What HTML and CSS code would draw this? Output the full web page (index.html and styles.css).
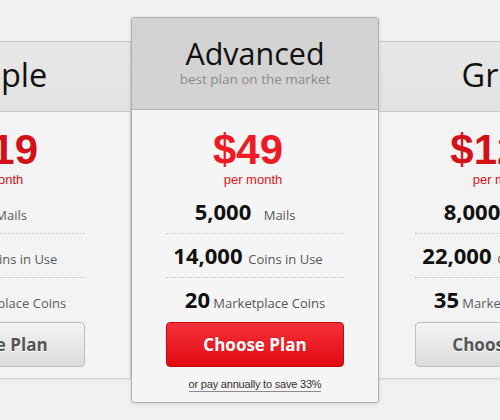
FILE: index.html
```html
<!doctype html>
<html lang="en">
<head>
    <meta charset="utf-8" />
    <link rel="stylesheet" href="styles.css">
    <title>Pricing plans</title>
</head>
<body>
    <div class="plans">
        <!--左侧套餐-->
        <div class="plan side">
            <div class="plan-head">
                <h2>Simple</h2>
            </div>
            <div class="plan-body">
                <div class="price">$19</div>
                <div class="per">per month</div>
                <ul class="feats">
                    <li>500 <span class="unit">&nbsp;&nbsp;Mails</span></li>
                    <li>4,000 <span class="unit">Coins in Use</span></li>
                    <li>10<span class="unit"> Marketplace Coins</span></li>
                </ul>
                <a class="btn" href="#">Choose Plan</a>
            </div>
        </div>

        <!--推荐套餐-->
        <div class="plan featured">
            <div class="plan-head">
                <h2>Advanced</h2>
                <p>best plan on the market</p>
            </div>
            <div class="plan-body">
                <div class="price">$49</div>
                <div class="per">per month</div>
                <ul class="feats">
                    <li>5,000 <span class="unit">&nbsp;&nbsp;Mails</span></li>
                    <li>14,000 <span class="unit">Coins in Use</span></li>
                    <li>20<span class="unit"> Marketplace Coins</span></li>
                </ul>
                <a class="btn btn-red" href="#">Choose Plan</a>
                <a class="annual" href="#">or pay annually to save 33%</a>
            </div>
        </div>

        <!--右侧套餐-->
        <div class="plan side">
            <div class="plan-head">
                <h2>Great</h2>
            </div>
            <div class="plan-body">
                <div class="price">$129</div>
                <div class="per">per month</div>
                <ul class="feats">
                    <li>8,000 <span class="unit">&nbsp;&nbsp;Mails</span></li>
                    <li>22,000 <span class="unit">Coins in Use</span></li>
                    <li>35<span class="unit"> Marketplace Coins</span></li>
                </ul>
                <a class="btn" href="#">Choose Plan</a>
            </div>
        </div>
    </div>
</body>
</html>
```

FILE: styles.css
```css
html, body {
    height: 100%;
}
body {
    margin: 0;
    padding: 0;
    background: #f1f1f1;
    overflow: hidden;
    font-family: "Open Sans", "Liberation Sans", sans-serif;
}
.plans {
    display: flex;
    align-items: flex-start;
    margin-left: -139px;
    padding-top: 17px;
}
.plan {
    flex: none;
    box-sizing: border-box;
    text-align: center;
}
.plan h2 {
    margin: 0;
    font-weight: normal;
    color: #111;
}

/* 两侧套餐 */
.side {
    width: 270px;
    margin-top: 24px;
    background: #f3f3f3;
    border: 1px solid #d2d2d2;
    border-top-color: #c6c6c6;
    box-shadow: 0 1px 2px rgba(0, 0, 0, .06);
}
.side .plan-head {
    padding: 15px 0 18px;
    background: linear-gradient(#e8e8e8, #e2e2e2);
    border-bottom: 1px solid #cbcbcb;
}
.side h2 {
    font-size: 32.5px;
    line-height: 36px;
}
.side .plan-body {
    padding: 16px 0 11px;
}
.side .price,
.side .per {
    color: #d31118;
}
.side .unit {
    color: #5c5c5c;
}
.side:first-child .price {
    padding: 0 0 0 14px;
}

/* 中间套餐 */
.featured {
    position: relative;
    z-index: 1;
    width: 248px;
    margin-right: -10px;
    background: #f5f5f5;
    border: 1px solid #aeaeae;
    border-radius: 3px;
    box-shadow: 0 1px 4px rgba(0, 0, 0, .12);
}
.featured .plan-head {
    padding: 18px 0 21px;
    background: #d3d3d3;
    border-bottom: 1px solid #b2b2b2;
    border-radius: 2px 2px 0 0;
}
.featured h2 {
    font-size: 30.5px;
    line-height: 34px;
}
.featured p {
    margin: 0;
    font-size: 13.5px;
    line-height: 18px;
    color: #8a8a8a;
}
.featured .plan-body {
    padding: 18px 0 9px;
}

.price {
    padding-right: 14px;
    font-family: "Liberation Sans", Arial, sans-serif;
    font-weight: bold;
    font-size: 42px;
    line-height: 44px;
    color: #ee1b24;
}
.per {
    padding-right: 4px;
    font-family: "Liberation Sans", Arial, sans-serif;
    font-size: 13px;
    line-height: 16px;
    color: #e3141c;
}
.feats {
    list-style: none;
    width: 178px;
    margin: 2px auto 0;
    padding: 0;
}
.feats li {
    font-size: 22px;
    line-height: 43px;
    font-weight: bold;
    color: #111;
    border-bottom: 1px dotted #c4c4c4;
}
.feats li:nth-child(1) {
    padding-right: 20px;
}
.feats li:nth-child(2) {
    padding-right: 14px;
}
.feats li:last-child {
    border-bottom: 0;
}
.unit {
    font-size: 13px;
    line-height: 1;
    font-weight: normal;
    color: #555;
}

.btn {
    display: block;
    box-sizing: border-box;
    width: 178px;
    height: 45px;
    margin: 1px auto 0;
    font-size: 17px;
    line-height: 43px;
    font-weight: bold;
    color: #555;
    text-decoration: none;
    text-shadow: 0 1px 0 #fff;
    background: linear-gradient(#f4f4f4, #dbdbdb);
    border: 1px solid #bdbdbd;
    border-radius: 4px;
}
.btn-red {
    color: #fff;
    text-shadow: 0 -1px 0 rgba(0, 0, 0, .15);
    background: linear-gradient(#f5313b, #e10a11);
    border-color: #c9080e;
}
.annual {
    display: inline-block;
    margin-top: 11px;
    font-family: "Liberation Sans", Arial, sans-serif;
    font-size: 11px;
    line-height: 13px;
    letter-spacing: -.2px;
    color: #333;
    text-decoration: none;
    border-bottom: 1px solid #8a8a8a;
}
```
